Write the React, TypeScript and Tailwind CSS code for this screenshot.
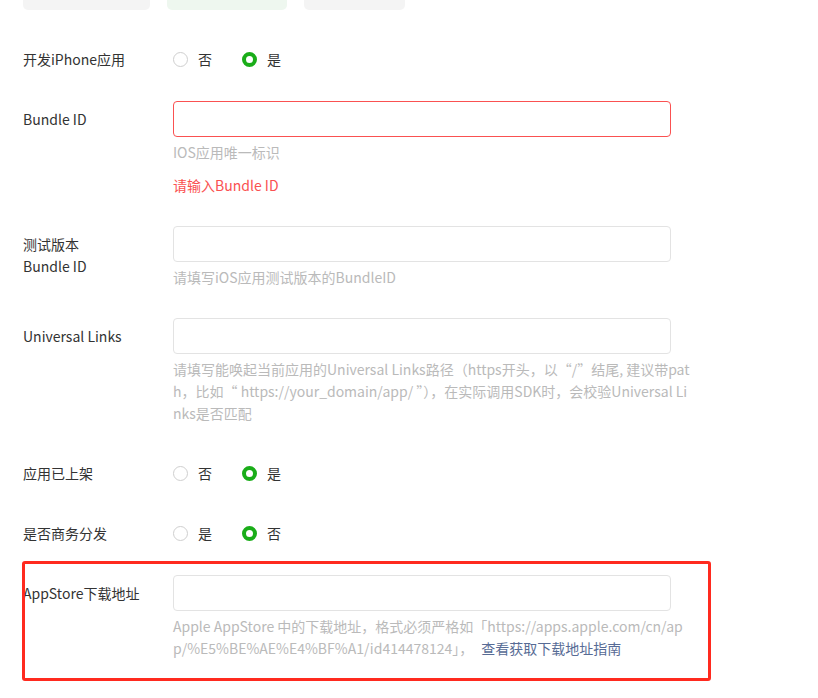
import type { ReactNode } from "react";

function Radio({ checked, label }: { checked?: boolean; label: string }) {
  return (
    <label className="flex items-center">
      {checked ? (
        <span className="box-border h-[15px] w-[15px] rounded-full border-[4.5px] border-[#1aad19] bg-white" />
      ) : (
        <span className="box-border h-[15px] w-[15px] rounded-full border border-[#cfcfcf] bg-white" />
      )}
      <span className="ml-[10px]">{label}</span>
    </label>
  );
}

function RadioRow({ label, options, className = "" }: { label: string; options: [string, string]; className?: string }) {
  return (
    <div className={`flex h-[22px] items-center ${className}`}>
      <div className="w-[150px] shrink-0">{label}</div>
      <div className="flex items-center gap-[30px]">
        <Radio label={options[0]} />
        <Radio checked label={options[1]} />
      </div>
    </div>
  );
}

function InputRow({
  label,
  error,
  className = "",
  children,
}: {
  label: ReactNode;
  error?: boolean;
  className?: string;
  children?: ReactNode;
}) {
  return (
    <div className={`flex ${className}`}>
      <div className="w-[150px] shrink-0 pt-[7px]">{label}</div>
      <div className="w-[520px]">
        <input
          className={`box-border block h-9 w-[498px] rounded-[4px] border bg-white px-3 outline-none ${
            error ? "border-[#fa5151]" : "border-[#e3e3e3]"
          }`}
        />
        {children}
      </div>
    </div>
  );
}

function Help({ children }: { children: ReactNode }) {
  return <div className="mt-1 break-all text-[#bababa]">{children}</div>;
}

export default function App() {
  return (
    <div className="min-h-[698px] bg-white pl-[23px] font-['Noto_Sans_CJK_SC',sans-serif] text-[14px] leading-[22px] text-[#333333]">
      <div className="flex gap-[17px]">
        <div className="h-[10px] w-[127px] rounded-b-[5px] bg-[#f4f4f4]" />
        <div className="h-[10px] w-[120px] rounded-b-[5px] bg-[#eef7ef]" />
        <div className="h-[10px] w-[101px] rounded-b-[5px] bg-[#f4f4f4]" />
      </div>

      <RadioRow className="mt-[38px]" label="开发iPhone应用" options={["否", "是"]} />

      <InputRow className="mt-[31px]" label="Bundle ID" error>
        <Help>IOS应用唯一标识</Help>
        <div className="mt-[11px] text-[#fa5151]">请输入Bundle ID</div>
      </InputRow>

      <InputRow
        className="mt-[30px]"
        label={
          <>
            测试版本
            <br />
            Bundle ID
          </>
        }
      >
        <Help>请填写iOS应用测试版本的BundleID</Help>
      </InputRow>

      <InputRow className="mt-[30px]" label="Universal Links">
        <Help>
          请填写能唤起当前应用的Universal Links路径（https开头，以“/”结尾, 建议带path，比如“ https://your_domain/app/ ”），在实际调用SDK时，会校验Universal Links是否匹配
        </Help>
      </InputRow>

      <RadioRow className="mt-[38px]" label="应用已上架" options={["否", "是"]} />
      <RadioRow className="mt-[38px]" label="是否商务分发" options={["是", "否"]} />

      <div className="relative mt-[31px]">
        <InputRow label="AppStore下载地址">
          <Help>
            Apple AppStore 中的下载地址，格式必须严格如「https://apps.apple.com/cn/app/%E5%BE%AE%E4%BF%A1/id414478124」，
            <a className="ml-[8px] text-[#576b95]">查看获取下载地址指南</a>
          </Help>
        </InputRow>
        <div className="pointer-events-none absolute left-[-1px] top-[-14px] h-[120px] w-[689px] rounded-[3px] border-[3px] border-[#ff2a1f]" />
      </div>
    </div>
  );
}
